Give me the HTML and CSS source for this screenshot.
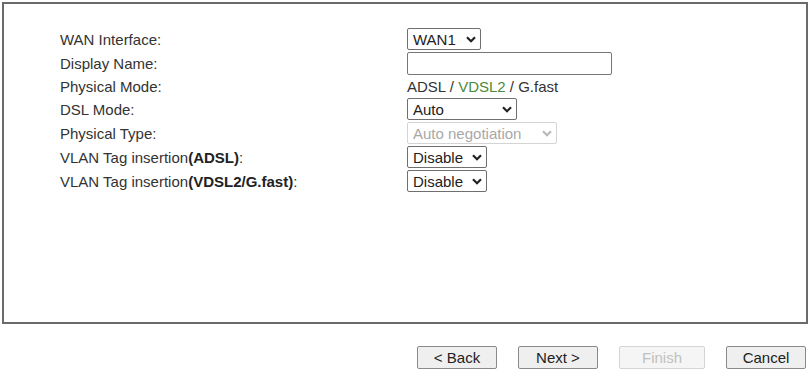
FILE: index.html
```html
<!DOCTYPE html>
<html>
<head>
<meta charset="utf-8">
<link rel="stylesheet" href="styles.css">
</head>
<body>
<div class="panel">
  <div class="form">
    <div class="row"><div class="label">WAN Interface:</div><div class="value"><span class="sel w-wan"><span class="txt">WAN1</span><svg class="chev" viewBox="0 0 10 7" width="10" height="7"><path d="M1 1.2 L5 5.2 L9 1.2" fill="none" stroke="currentColor" stroke-width="2.2"/></svg></span></div></div>
    <div class="row"><div class="label">Display Name:</div><div class="value"><span class="input"></span></div></div>
    <div class="row short"><div class="label">Physical Mode:</div><div class="text">ADSL / <span class="green">VDSL2</span> / G.fast</div></div>
    <div class="row"><div class="label">DSL Mode:</div><div class="value"><span class="sel w-dsl"><span class="txt">Auto</span><svg class="chev" viewBox="0 0 10 7" width="10" height="7"><path d="M1 1.2 L5 5.2 L9 1.2" fill="none" stroke="currentColor" stroke-width="2.2"/></svg></span></div></div>
    <div class="row"><div class="label">Physical Type:</div><div class="value"><span class="sel w-phy disabled"><span class="txt">Auto negotiation</span><svg class="chev" viewBox="0 0 10 7" width="10" height="7"><path d="M1 1.2 L5 5.2 L9 1.2" fill="none" stroke="currentColor" stroke-width="2.2"/></svg></span></div></div>
    <div class="row"><div class="label">VLAN Tag insertion<b>(ADSL)</b>:</div><div class="value"><span class="sel w-dis"><span class="txt">Disable</span><svg class="chev" viewBox="0 0 10 7" width="10" height="7"><path d="M1 1.2 L5 5.2 L9 1.2" fill="none" stroke="currentColor" stroke-width="2.2"/></svg></span></div></div>
    <div class="row"><div class="label">VLAN Tag insertion<b>(VDSL2/G.fast)</b>:</div><div class="value"><span class="sel w-dis"><span class="txt">Disable</span><svg class="chev" viewBox="0 0 10 7" width="10" height="7"><path d="M1 1.2 L5 5.2 L9 1.2" fill="none" stroke="currentColor" stroke-width="2.2"/></svg></span></div></div>
  </div>
</div>
<div class="buttons">
  <button class="btn">&lt; Back</button>
  <button class="btn">Next &gt;</button>
  <button class="btn off" disabled>Finish</button>
  <button class="btn">Cancel</button>
</div>
</body>
</html>
```
FILE: styles.css
```css
html, body {
  margin: 0;
  padding: 0;
  background: #fff;
}
body {
  font-family: "Liberation Sans", Arial, sans-serif;
  font-size: 15px;
  color: #333;
  width: 810px;
  height: 373px;
  overflow: hidden;
}
.panel {
  margin: 2px 0 0 2px;
  width: 806px;
  height: 322px;
  box-sizing: border-box;
  border: 2px solid #6a6a6a;
}
.form {
  padding: 23px 0 0 56px;
  display: flex;
  flex-direction: column;
}
.row {
  display: flex;
  align-items: center;
  height: 24px;
}
.row.short {
  height: 22px;
}
.label {
  width: 347px;
  flex: none;
}
.label b {
  color: #222;
}
.value {
  display: flex;
  align-items: center;
}
.text {
  white-space: pre;
}
.green {
  color: #4b8a3a;
}
.sel {
  display: inline-flex;
  align-items: center;
  justify-content: space-between;
  box-sizing: border-box;
  height: 22px;
  border: 1px solid #6f6f6f;
  border-radius: 2px;
  padding: 0 4px 0 5px;
  color: #222;
  background: #fff;
}
.sel .chev {
  color: #222;
  flex: none;
}
.sel.disabled {
  border-color: #d4d4d4;
  color: #a8a8a8;
}
.sel.disabled .chev {
  color: #b8b8b8;
}
.w-wan { width: 74px; }
.w-dsl { width: 110px; }
.w-phy { width: 150px; }
.w-dis { width: 80px; }
.input {
  display: block;
  box-sizing: border-box;
  width: 205px;
  height: 23px;
  border: 1px solid #767676;
  border-radius: 2px;
}
.buttons {
  display: flex;
  justify-content: flex-end;
  gap: 21px;
  padding: 22px 4px 0 0;
}
.btn {
  font-family: "Liberation Sans", Arial, sans-serif;
  font-size: 15px;
  color: #222;
  width: 80px;
  height: 23px;
  padding: 0;
  background: #efefef;
  border: 1px solid #8a8a8a;
  border-radius: 2px;
}
.btn.off {
  width: 86px;
  color: #c0c0c0;
  background: #f5f5f5;
  border-color: #d4d4d4;
}
```
